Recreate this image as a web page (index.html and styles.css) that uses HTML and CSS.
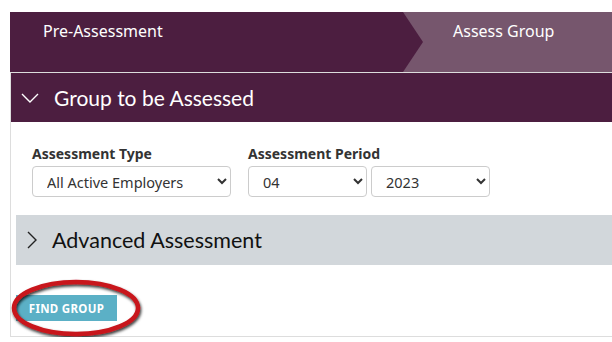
FILE: index.html
```html
<!doctype html>
<html>

<head>
  <meta charset="utf-8">
  <title>Assessment</title>
  <link rel="stylesheet" href="styles.css">
</head>

<body>
  <div class="page">
    <div class="steps">
      <div class="step done">Pre-Assessment</div>
      <div class="step current">Assess Group</div>
    </div>
    <div class="panel">
      <div class="panel-head">
        <svg class="chev" width="18" height="10" viewBox="0 0 18 10"><path d="M1 1 L9 9 L17 1" fill="none" stroke="#fff" stroke-width="1.4"/></svg>
        <span>Group to be Assessed</span>
      </div>
      <div class="panel-body">
        <div class="fields">
          <div class="field">
            <label class="lbl">Assessment Type</label>
            <select class="sel sel-type">
              <option>All Active Employers</option>
            </select>
          </div>
          <div class="field">
            <label class="lbl">Assessment Period</label>
            <div class="pair">
              <select class="sel sel-small">
                <option>04</option>
              </select>
              <select class="sel sel-small">
                <option>2023</option>
              </select>
            </div>
          </div>
        </div>
        <div class="sub-head">
          <svg class="chev-r" width="10" height="18" viewBox="0 0 10 18"><path d="M1 1 L9 9 L1 17" fill="none" stroke="#222" stroke-width="1.4"/></svg>
          <span>Advanced Assessment</span>
        </div>
        <div class="actions">
          <button class="btn">FIND GROUP</button>
          <svg class="circle" width="140" height="66" viewBox="0 0 140 66">
            <defs>
              <filter id="sh" x="-20%" y="-20%" width="140%" height="140%">
                <feDropShadow dx="1" dy="2" stdDeviation="1.5" flood-color="#000" flood-opacity="0.8"/>
              </filter>
            </defs>
            <ellipse cx="68" cy="31" rx="62" ry="26" fill="none" stroke="#c8141a" stroke-width="4.5" filter="url(#sh)"/>
          </svg>
        </div>
      </div>
    </div>
  </div>
</body>

</html>
```

FILE: styles.css
```css
body {
  margin: 0;
  overflow: hidden;
  background: #fff;
  font-family: "Noto Sans", sans-serif;
}

.page {
  padding: 12px 0 0 10px;
  width: 720px;
}

/* step bar */
.steps {
  display: flex;
  height: 60px;
  background: #76566d;
}

.step {
  font-size: 16px;
  color: #fff;
  padding-top: 8px;
  box-sizing: border-box;
}

.step.done {
  width: 413px;
  padding-left: 33px;
  background: #4c1e40;
  clip-path: polygon(0 0, 393px 0, 413px 50%, 393px 100%, 0 100%);
}

.step.current {
  padding-left: 30px;
}

/* panel */
.panel {
  border: 1px solid #ddd;
  height: 263px;
}

.panel-head {
  display: flex;
  align-items: center;
  height: 49px;
  background: #4c1e40;
  color: #fff;
  font-family: "Lato", sans-serif;
  font-size: 21px;
}

.chev {
  margin: 0 15px 0 10px;
}

.panel-body {
  padding: 22px 0 0 5px;
}

.fields {
  display: flex;
  gap: 17px;
  padding-left: 16px;
}

.lbl {
  display: block;
  font-size: 14px;
  font-weight: bold;
  color: #333;
  margin-bottom: 3px;
}

.sel {
  height: 31px;
  border: 1px solid #ccc;
  border-radius: 4px;
  background: #fff;
  font-family: "Noto Sans", sans-serif;
  font-size: 14.5px;
  color: #333;
  padding: 0 10px;
}

.sel-type {
  width: 199px;
}

.pair {
  display: flex;
  gap: 4px;
}

.sel-small {
  width: 119px;
}

.sub-head {
  display: flex;
  align-items: center;
  height: 50px;
  margin-top: 18px;
  background: #d2d7db;
  color: #111;
  font-family: "Lato", sans-serif;
  font-size: 21.5px;
}

.chev-r {
  margin: 0 15px 0 11px;
}

.actions {
  position: relative;
  padding-top: 30px;
}

.btn {
  width: 101px;
  height: 26px;
  border: none;
  background: #5bb0c6;
  color: #fff;
  font-family: "Noto Sans", sans-serif;
  font-size: 11.5px;
  font-weight: bold;
  letter-spacing: 0.3px;
  padding: 0;
}

.circle {
  position: absolute;
  left: -8px;
  top: 12px;
}
```
